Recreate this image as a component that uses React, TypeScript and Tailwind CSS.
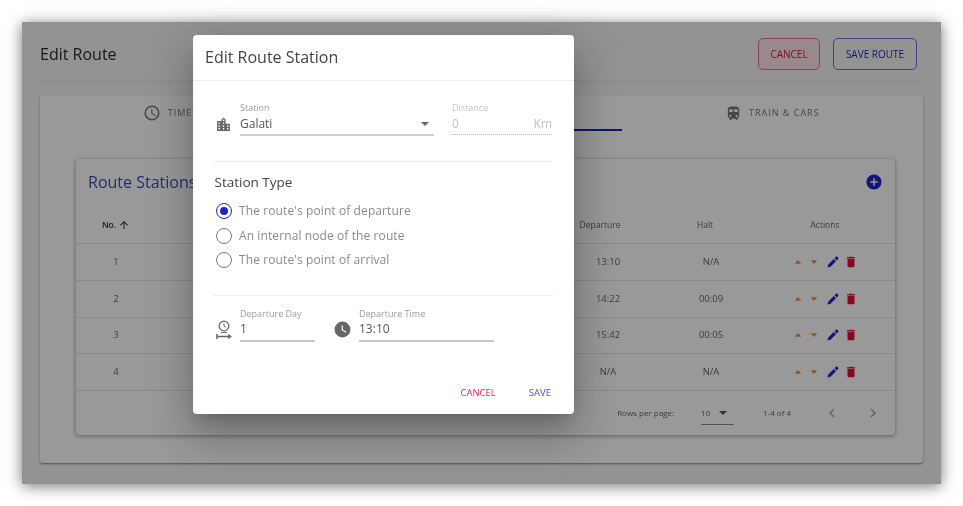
import React from 'react';

const FONT = "font-['Open_Sans',sans-serif]";

const Icon = ({ d, className }: { d: string; className?: string }) => (
  <svg viewBox="0 0 24 24" fill="currentColor" className={className}>
    <path d={d} />
  </svg>
);

const paths = {
  clockOutline: 'M12 20a8 8 0 1 0 0-16 8 8 0 0 0 0 16M12 2a10 10 0 1 1 0 20C6.47 22 2 17.5 2 12A10 10 0 0 1 12 2m.5 5v5.25l4.5 2.67-.75 1.23L11 13V7h1.5z',
  clockSolid: 'M12 2a10 10 0 1 0 0 20 10 10 0 0 0 0-20m4.2 14.2L11 13V7h1.5v5.2l4.5 2.7-.8 1.3z',
  train: 'M12 2c-4 0-8 .5-8 4v9.5C4 17.43 5.57 19 7.5 19L6 20.5v.5h2.23l2-2H14l2 2h2v-.5L16.5 19c1.93 0 3.5-1.57 3.5-3.5V6c0-3.5-3.58-4-8-4zM7.5 17c-.83 0-1.5-.67-1.5-1.5S6.67 14 7.5 14s1.5.67 1.5 1.5S8.33 17 7.5 17zm3.5-7H6V6h5v4zm2 0V6h5v4h-5zm3.5 7c-.83 0-1.5-.67-1.5-1.5s.67-1.5 1.5-1.5 1.5.67 1.5 1.5-.67 1.5-1.5 1.5z',
  city: 'M15 11V5l-3-3-3 3v2H3v14h18V11h-6zm-8 8H5v-2h2v2zm0-4H5v-2h2v2zm0-4H5V9h2v2zm6 8h-2v-2h2v2zm0-4h-2v-2h2v2zm0-4h-2V9h2v2zm0-4h-2V5h2v2zm6 12h-2v-2h2v2zm0-4h-2v-2h2v2z',
  add: 'M12 2C6.48 2 2 6.48 2 12s4.48 10 10 10 10-4.48 10-10S17.52 2 12 2zm5 11h-4v4h-2v-4H7v-2h4V7h2v4h4v2z',
  trash: 'M6 19c0 1.1.9 2 2 2h8c1.1 0 2-.9 2-2V7H6v12zM19 4h-3.5l-1-1h-5l-1 1H5v2h14V4z',
  arrowUp: 'M4 12l1.41 1.41L11 7.83V20h2V7.83l5.58 5.59L20 12l-8-8-8 8z',
  up: 'M2 17l10-11 10 11H2z',
  down: 'M2 7l10 11 10-11H2z',
  pen: 'M1 23l1.5-6L13.5 6l4.5 4.5L7 21.5 1 23zM15 4.5l2.5-2.5c1-1 2.5-1.2 3.5-.2l1.2 1.2c1 1 .8 2.5-.2 3.5L19.5 9 15 4.5z',
  left: 'M15.41 7.41L14 6l-6 6 6 6 1.41-1.41L10.83 12z',
  right: 'M10 6L8.59 7.41 13.17 12l-4.58 4.59L10 18l6-6z',
};

const rows = [
  { no: 1, departure: '13:10', halt: 'N/A' },
  { no: 2, departure: '14:22', halt: '00:09' },
  { no: 3, departure: '15:42', halt: '00:05' },
  { no: 4, departure: 'N/A', halt: 'N/A' },
];

const RowActions = () => (
  <div className="flex items-center justify-center pl-[2px]">
    <Icon d={paths.up} className="w-[8px] h-[8px] text-[#f0902c]" />
    <Icon d={paths.down} className="w-[8px] h-[8px] ml-[7.5px] text-[#f0902c]" />
    <Icon d={paths.pen} className="w-[12px] h-[12px] ml-[9px] text-[#2424d8]" />
    <Icon d={paths.trash} className="w-[14px] h-[14px] ml-[5px] text-[#e0103c]" />
  </div>
);

const Radio = ({ label, checked }: { label: string; checked?: boolean }) => (
  <div className="flex items-center h-[24.5px]">
    <span className={`w-4 h-4 ml-[2px] rounded-full border-[1.5px] flex items-center justify-center ${checked ? 'border-[#2222c8]' : 'border-[#757575]'}`}>
      {checked && <span className="w-2 h-2 rounded-full bg-[#2222c8]" />}
    </span>
    <span className="ml-[7px] text-[12px] text-[#8a8a8a] tracking-[0.1px]">{label}</span>
  </div>
);

const Field = ({ label, value, className }: { label: string; value: string; className: string }) => (
  <div className={className}>
    <div className="text-[9px] leading-[12px] text-[#9a9a9a]">{label}</div>
    <div className="h-[18px] text-[12px] leading-[18px] text-[#555] border-b-2 border-[#c8c8c8] box-content pb-[2px]">{value}</div>
  </div>
);

export default function App() {
  return (
    <div className={`w-[963px] h-[506px] bg-white p-[22px] overflow-hidden blur-[0.4px] ${FONT}`}>
      <div className="relative w-[919px] h-[462px] bg-[#f5f5f5] shadow-[0_2px_14px_rgba(0,0,0,0.55)]">
        {/* Page behind the dialog */}
        <div className="px-[18px] pt-[16px] h-full">
          <div className="flex items-start justify-between h-[43px] border-b border-[#e6e6e6] box-content pr-[1px]">
            <h1 className="text-[16px] leading-[32px] font-medium text-[#2a2a2a]">Edit Route</h1>
            <div className="flex gap-[13px] pr-[5px]">
              <button className="w-[62px] h-[32px] rounded-[5px] border border-[#f56a85] bg-[#fde4e9] text-[10px] font-medium text-[#e0103c]">CANCEL</button>
              <button className="w-[84px] h-[32px] rounded-[5px] border border-[#6a6ae8] text-[10px] font-medium text-[#2222c8]">SAVE ROUTE</button>
            </div>
          </div>

          <div className="mt-[13px] h-[368px] bg-white rounded-[3px] shadow-[0_1px_2px_rgba(0,0,0,0.45)]">
            <div className="grid grid-cols-3 h-[36px] text-[9px] tracking-[1px] text-[#777]">
              <div className="flex items-center justify-center gap-[7px] pr-[8px]">
                <Icon d={paths.clockOutline} className="w-[18px] h-[18px] text-[#777]" />
                <span>TIMETABLE</span>
              </div>
              <div className="h-[36px] mx-[7px] border-b-2 border-[#2222c8]" />
              <div className="flex items-center justify-center gap-[7px] pr-[7px]">
                <Icon d={paths.train} className="w-[17px] h-[17px] text-[#777]" />
                <span>TRAIN &amp; CARS</span>
              </div>
            </div>

            <div className="mt-[28px] mx-[36px] w-[819px] h-[276px] bg-white rounded-[4px] shadow-[0_1px_4px_rgba(0,0,0,0.4)]">
              <div className="flex items-center justify-between h-[48px] pb-[2px] pl-[12px] pr-[12px]">
                <h2 className="text-[16px] text-[#3b4cb8]">Route Stations</h2>
                <Icon d={paths.add} className="w-[18px] h-[18px] text-[#2222c8]" />
              </div>

              <div className="grid grid-cols-[80px_1fr_80px_126px_102px_19px] items-center h-[37px] border-b border-[#e6e6e6] text-[8.5px] text-[#666]">
                <div className="flex items-center justify-center gap-[2px] font-semibold text-[#333]">
                  <span>No.</span>
                  <Icon d={paths.arrowUp} className="w-[12px] h-[12px]" />
                </div>
                <div />
                <div className="text-center pr-[16px]">Departure</div>
                <div className="text-center pr-[12px]">Halt</div>
                <div className="text-center">Actions</div>
              </div>

              {rows.map((r) => (
                <div key={r.no} className="grid grid-cols-[80px_1fr_80px_126px_102px_19px] items-center h-[36.8px] border-b border-[#e6e6e6] text-[9.5px] text-[#666]">
                  <div className="text-center">{r.no}</div>
                  <div />
                  <div className="text-center">{r.departure}</div>
                  <div className="text-center">{r.halt}</div>
                  <RowActions />
                </div>
              ))}

              <div className="flex items-center justify-end h-[44px] text-[8px] text-[#666]">
                <span>Rows per page:</span>
                <div className="ml-[27px] w-[33px] h-[23px] flex items-center justify-between border-b border-[#8a8a8a] text-[#666]">
                  <span>10</span>
                  <span className="mr-[7px] w-0 h-0 border-l-[4px] border-r-[4px] border-t-[4px] border-l-transparent border-r-transparent border-t-[#555]" />
                </div>
                <span className="ml-[29px]">1-4 of 4</span>
                <Icon d={paths.left} className="ml-[32px] w-[18px] h-[18px] text-[#a8a8a8]" />
                <Icon d={paths.right} className="ml-[23px] mr-[13px] w-[18px] h-[18px] text-[#a8a8a8]" />
              </div>
            </div>
          </div>
        </div>

        {/* Backdrop */}
        <div className="absolute inset-0 bg-black/40" />

        {/* Dialog */}
        <div className="absolute left-[171px] top-[13px] w-[381px] h-[379px] bg-white rounded-[4px] shadow-[0_11px_15px_-7px_rgba(0,0,0,0.2),0_24px_38px_3px_rgba(0,0,0,0.14),0_9px_46px_8px_rgba(0,0,0,0.12)] flex flex-col">
          <div className="h-[46px] pb-[2px] px-[12px] flex items-center border-b border-[#ececec]">
            <h3 className="text-[16px] text-[#444]">Edit Route Station</h3>
          </div>

          <div className="px-[21px]">
            <div className="flex items-start pt-[21px] h-[81px] border-b border-[#ececec]">
              <Icon d={paths.city} className="mt-[14px] ml-[1px] w-[17px] h-[17px] text-[#666]" />
              <div className="ml-[8px] w-[194px]">
                <div className="text-[9px] leading-[12px] text-[#9a9a9a]">Station</div>
                <div className="h-[20px] flex items-center justify-between text-[12px] text-[#555] border-b-2 border-[#cfcfcf] box-content">
                  <span>Galati</span>
                  <span className="mr-[5px] w-0 h-0 border-l-[4px] border-r-[4px] border-t-[4px] border-l-transparent border-r-transparent border-t-[#666]" />
                </div>
              </div>
              <div className="ml-[18px] w-[100px]">
                <div className="text-[9px] leading-[12px] text-[#c2c2c2]">Distance</div>
                <div className="h-[20px] flex items-center justify-between text-[12px] text-[#c2c2c2] border-b border-dotted border-[#b8b8b8] box-content">
                  <span>0</span>
                  <span>Km</span>
                </div>
              </div>
            </div>

            <div className="h-[134px] pt-[10px] border-b border-[#ececec]">
              <h4 className="h-[20px] ml-[0.5px] text-[13.5px] leading-[20px] text-[#444]">Station Type</h4>
              <div className="mt-[7px]">
                <Radio label="The route's point of departure" checked />
                <Radio label="An internal node of the route" />
                <Radio label="The route's point of arrival" />
              </div>
            </div>

            <div className="flex items-start pt-[12px]">
              <svg viewBox="0 0 16 20" fill="none" stroke="#666" className="mt-[12px] ml-[2px] w-[16px] h-[20px]">
                <circle cx="8" cy="6" r="4.8" strokeWidth="1.3" />
                <path d="M8 3.4v2.8l1.8 1.1" strokeWidth="1" />
                <path d="M5 12.6h6" strokeWidth="1" />
                <path d="M1 14v5M1 16.5h13" strokeWidth="1.5" />
                <path d="M12.5 14.2l3 2.3-3 2.3z" fill="#666" strokeWidth="0.5" />
              </svg>
              <Field label="Departure Day" value="1" className="ml-[8px] w-[75px]" />
              <Icon d={paths.clockSolid} className="mt-[12px] ml-[18px] w-[19px] h-[19px] text-[#666]" />
              <Field label="Departure Time" value="13:10" className="ml-[7px] w-[135px]" />
            </div>
          </div>

          <div className="mt-auto h-[42px] flex items-center justify-end pr-[23px] gap-[33px] text-[9.5px]">
            <span className="text-[#f0284f]">CANCEL</span>
            <span className="text-[#4b4be8]">SAVE</span>
          </div>
        </div>
      </div>
    </div>
  );
}
